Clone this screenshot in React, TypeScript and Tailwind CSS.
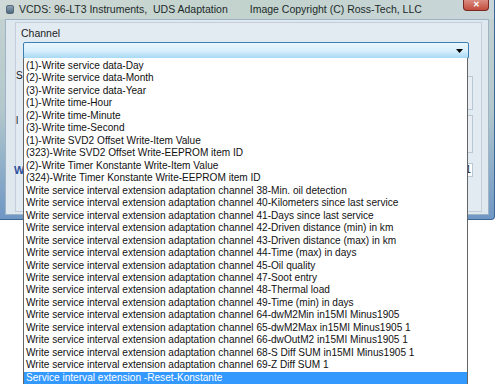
const items = [
  "(1)-Write service data-Day",
  "(2)-Write service data-Month",
  "(3)-Write service data-Year",
  "(1)-Write time-Hour",
  "(2)-Write time-Minute",
  "(3)-Write time-Second",
  "(1)-Write SVD2 Offset Write-Item Value",
  "(323)-Write SVD2 Offset Write-EEPROM item ID",
  "(2)-Write Timer Konstante Write-Item Value",
  "(324)-Write Timer Konstante Write-EEPROM item ID",
  "Write service interval extension adaptation channel 38-Min. oil detection",
  "Write service interval extension adaptation channel 40-Kilometers since last service",
  "Write service interval extension adaptation channel 41-Days since last service",
  "Write service interval extension adaptation channel 42-Driven distance (min) in km",
  "Write service interval extension adaptation channel 43-Driven distance (max) in km",
  "Write service interval extension adaptation channel 44-Time (max) in days",
  "Write service interval extension adaptation channel 45-Oil quality",
  "Write service interval extension adaptation channel 47-Soot entry",
  "Write service interval extension adaptation channel 48-Thermal load",
  "Write service interval extension adaptation channel 49-Time (min) in days",
  "Write service interval extension adaptation channel 64-dwM2Min in15MI Minus1905",
  "Write service interval extension adaptation channel 65-dwM2Max in15MI Minus1905 1",
  "Write service interval extension adaptation channel 66-dwOutM2 in15MI Minus1905 1",
  "Write service interval extension adaptation channel 68-S Diff SUM in15MI Minus1905 1",
  "Write service interval extension adaptation channel 69-Z Diff SUM 1",
];

const selected = "Service interval extension -Reset-Konstante";

const App = () => {
  return (
    <div className="relative w-[500px] h-[384px] overflow-hidden bg-white font-['Liberation_Sans',Arial,sans-serif] text-[#1a1a1a]">
      {/* background window */}
      <div className="w-[495px] h-[220px] flex flex-col bg-gradient-to-b from-[#c6d3d1] via-[#b3c8cc] to-[#6f97c4] rounded-br-[4px] border-r border-b border-[#3d6597]">
        {/* title bar */}
        <div className="h-[19px] flex items-center relative bg-gradient-to-r from-[#cfd9d7] via-[#c2d2cc] to-[#c9d6d9]">
          <div className="ml-[6px] w-[8px] h-[9px] rounded-[2px] bg-gradient-to-b from-[#8fa3b3] to-[#4e6a80] border border-[#55687a]" />
          <span className="ml-[5px] text-[10.5px] text-[#1c2a2a] whitespace-pre">
            VCDS: 96-LT3 Instruments,  UDS Adaptation
          </span>
          <span className="ml-[22px] text-[10.5px] text-[#1c2a2a]">
            Image Copyright (C) Ross-Tech, LLC
          </span>
          <div className="absolute left-[463px] top-0 w-[26px] h-[11px] rounded-b-[4px] bg-gradient-to-b from-[#d98b80] to-[#c24c3e] border border-[#7a2a22] border-t-0 flex items-center justify-center text-white text-[8px] font-bold leading-none">
            ✕
          </div>
        </div>
        {/* client */}
        <div className="flex-1 mx-[5px] mb-[4px] bg-[#dfe8ef] border border-[#9fb3c6] pt-[2px] pl-[9px] pr-[6px]">
          <div className="h-[190px] border border-[#c3ceda] bg-[#e3ebf2] pl-[4px] pr-[8px] pt-[4px]">
            <div className="text-[10.5px] leading-[12px] ml-[1px]">Channel</div>
            <div className="mt-[3px] ml-[3px] w-[446px] h-[17px] rounded-[2px] border border-[#3c7fb1] bg-gradient-to-b from-[#eaf6fd] via-[#d9f0fc] to-[#a7d9f5] flex items-center justify-end pr-[5px]">
              <svg width="7" height="4" viewBox="0 0 7 4">
                <path d="M0 0 L7 0 L3.5 4 Z" fill="#000" />
              </svg>
            </div>
            <div className="flex mt-[11px]">
              <span className="w-[10px] text-[10px] leading-[12px] -ml-[4px]">S</span>
              <div className="ml-[5px] flex-1 h-[34px] border border-[#b9c6d3] bg-[#e8eef4] mt-[6px]" />
            </div>
            <div className="flex mt-[5px]">
              <span className="w-[10px] text-[10px] leading-[12px] -ml-[4px]">l</span>
              <div className="ml-[5px] flex-1 h-[38px] border border-[#b9c6d3] bg-[#e8eef4]" />
            </div>
            <div className="flex mt-[9px] items-center">
              <span className="w-[10px] text-[11px] font-bold text-[#2d4f9a] -ml-[6px]">W</span>
              <div className="ml-[7px] flex-1 h-[14px] border border-[#b9c6d3] bg-white text-[10px] leading-[12px] text-right pr-[1px]">
                1
              </div>
            </div>
          </div>
        </div>
      </div>

      {/* open dropdown list */}
      <div className="absolute left-[23px] top-[58px] w-[445px] h-[340px] bg-white border-x border-[#646464] pt-[2px] text-[10.1px] text-[#111]">
        {items.map((it) => (
          <div key={it} className="h-[12.48px] leading-[12.48px] pl-[2px] whitespace-nowrap">
            {it}
          </div>
        ))}
        <div className="h-[12.48px] leading-[12.48px] pl-[2px] whitespace-nowrap bg-[#3399ff] text-white">
          {selected}
        </div>
      </div>
    </div>
  );
};

export default App;
